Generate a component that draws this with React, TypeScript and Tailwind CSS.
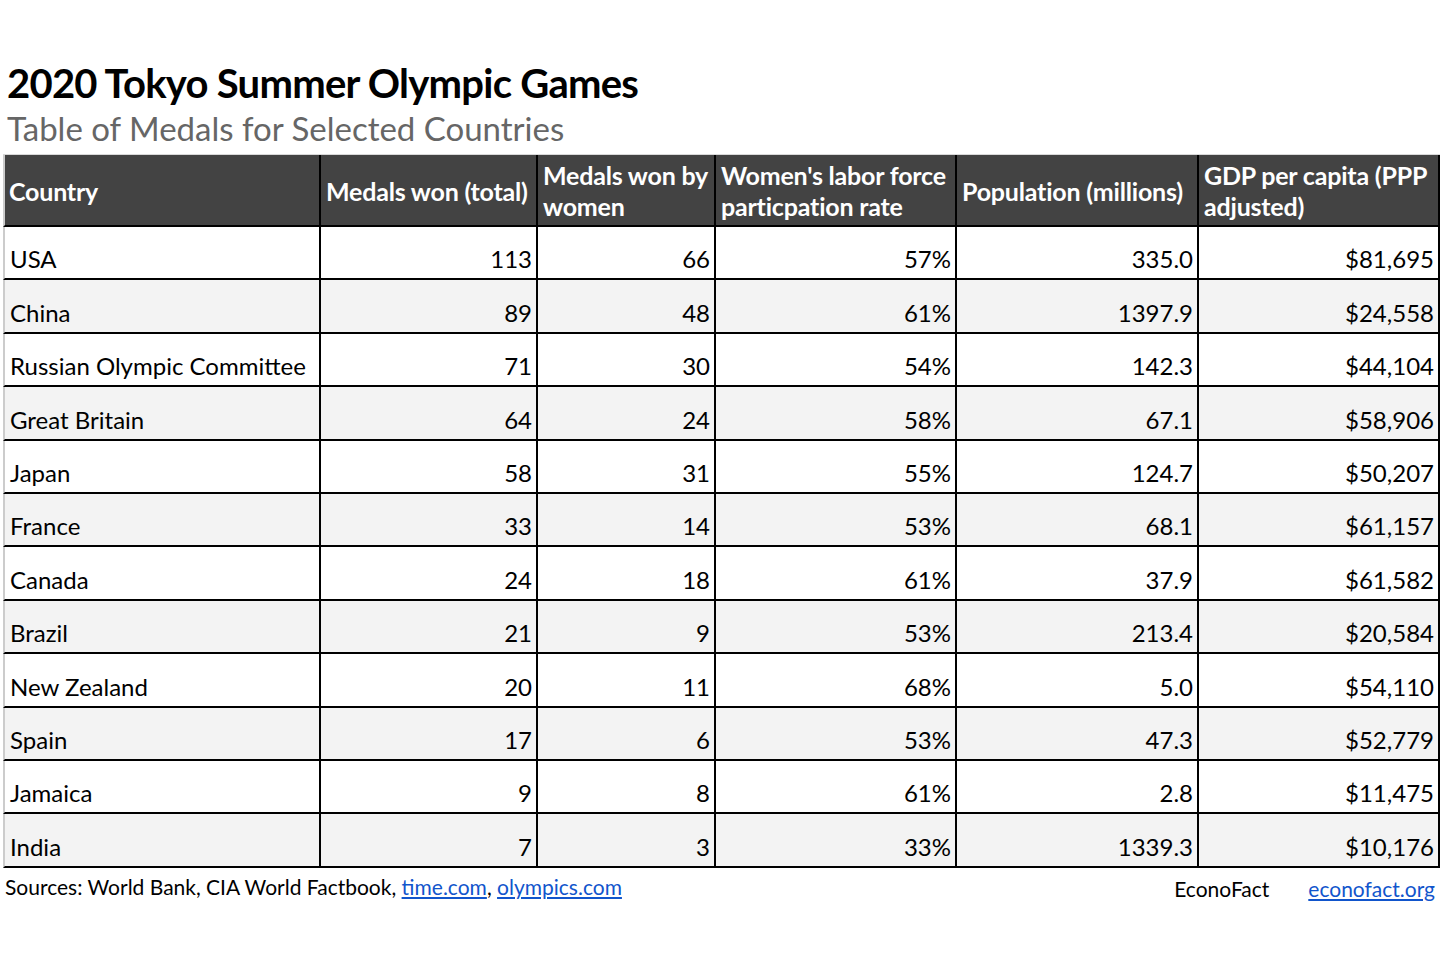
import React from "react";

const rows: [string, string, string, string, string, string][] = [
  ["USA", "113", "66", "57%", "335.0", "$81,695"],
  ["China", "89", "48", "61%", "1397.9", "$24,558"],
  ["Russian Olympic Committee", "71", "30", "54%", "142.3", "$44,104"],
  ["Great Britain", "64", "24", "58%", "67.1", "$58,906"],
  ["Japan", "58", "31", "55%", "124.7", "$50,207"],
  ["France", "33", "14", "53%", "68.1", "$61,157"],
  ["Canada", "24", "18", "61%", "37.9", "$61,582"],
  ["Brazil", "21", "9", "53%", "213.4", "$20,584"],
  ["New Zealand", "20", "11", "68%", "5.0", "$54,110"],
  ["Spain", "17", "6", "53%", "47.3", "$52,779"],
  ["Jamaica", "9", "8", "61%", "2.8", "$11,475"],
  ["India", "7", "3", "33%", "1339.3", "$10,176"],
];

const headers: string[][] = [
  ["Country"],
  ["Medals won (total)"],
  ["Medals won by", "women"],
  ["Women's labor force", "particpation rate"],
  ["Population (millions)"],
  ["GDP per capita (PPP", "adjusted)"],
];

export default function App() {
  return (
    <div
      className="w-[1440px] h-[960px] bg-white text-black overflow-hidden"
      style={{ fontFamily: "Lato, 'Noto Sans', sans-serif" }}
    >
      <div className="pt-[60px] pl-[7px]">
        <h1 className="text-[40px] font-bold leading-[46px] tracking-[-0.75px]">
          2020 Tokyo Summer Olympic Games
        </h1>
        <h2 className="text-[33px] leading-[44px] text-[#666666]">
          Table of Medals for Selected Countries
        </h2>
      </div>
      <div className="mt-[4px] ml-[3px] w-[1437px] border-t border-[#d9d9d9]">
        <div className="grid grid-cols-[318px_217px_178px_241px_242px_241px] bg-[#434343]">
          {headers.map((h, i) => (
            <div
              key={h[0]}
              className={
                i === 0
                  ? "h-[72px] flex flex-col justify-center border-l-2 border-l-[#cccccc] border-r-2 border-b-2 border-r-black border-b-black px-[4px] pt-[2px] text-white font-bold text-[25px] leading-[31px] tracking-[-0.2px] whitespace-nowrap"
                  : "h-[72px] flex flex-col justify-center border-r-2 border-b-2 border-black px-[5px] pt-[2px] text-white font-bold text-[25px] leading-[31px] tracking-[-0.2px] whitespace-nowrap"
              }
            >
              {h.map((line) => (
                <span key={line}>{line}</span>
              ))}
            </div>
          ))}
        </div>
        {rows.map((r, ri) => (
          <div
            key={r[0]}
            className={
              ri % 2 === 0
                ? "grid grid-cols-[318px_217px_178px_241px_242px_241px] bg-white"
                : "grid grid-cols-[318px_217px_178px_241px_242px_241px] bg-[#f3f3f3]"
            }
          >
            {r.map((c, ci) => (
              <div
                key={ci}
                className={
                  ci === 0
                    ? "h-[53.4px] flex items-end pb-[4px] pl-[5px] border-l-2 border-l-[#cccccc] border-r-2 border-b-2 border-r-black border-b-black text-[24px] leading-[30px]"
                    : "h-[53.4px] flex items-end justify-end pb-[4px] pr-[4px] border-r-2 border-b-2 border-black text-[24px] leading-[30px]"
                }
              >
                {c}
              </div>
            ))}
          </div>
        ))}
      </div>
      <div className="flex items-start ml-[5px] mt-[6px] text-[21px] leading-[26px]">
        <div>
          Sources: World Bank, CIA World Factbook,{" "}
          <a className="text-[#1155cc] underline">time.com</a>,{" "}
          <a className="text-[#1155cc] underline">olympics.com</a>
        </div>
        <div className="ml-auto flex gap-[39px] pr-[5px] pt-[2px]">
          <span>EconoFact</span>
          <a className="text-[#1155cc] underline">econofact.org</a>
        </div>
      </div>
    </div>
  );
}
